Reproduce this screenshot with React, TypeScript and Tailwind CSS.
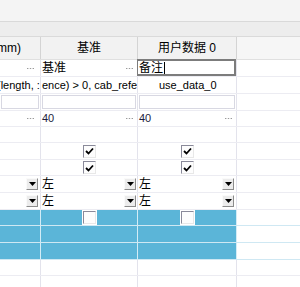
import React from "react";

const LINE = "border-[#e3e3ec]";

function Dots() {
  return (
    <svg width="7" height="3" viewBox="0 0 7 3" className="shrink-0">
      <rect x="0" y="1" width="1.4" height="1" fill="#9a9a9a" />
      <rect x="2.8" y="1" width="1.4" height="1" fill="#9a9a9a" />
      <rect x="5.6" y="1" width="1.4" height="1" fill="#9a9a9a" />
    </svg>
  );
}

function Check({ checked, big }: { checked: boolean; big?: boolean }) {
  return (
    <div
      className={`${big ? "w-[15px] h-[15px]" : "w-[13px] h-[13px]"} bg-[#fdfdfd] border border-t-[#8a8a9a] border-l-[#8a8a9a] border-r-[#e8e8e8] border-b-[#e8e8e8] flex items-center justify-center`}
    >
      {checked && (
        <svg width="9" height="8" viewBox="0 0 9 8">
          <path d="M1 4 L3.5 6.5 L8 1.5" stroke="#000" strokeWidth="1.8" fill="none" />
        </svg>
      )}
    </div>
  );
}

function Drop() {
  return (
    <div className="w-[12px] h-[12px] bg-[#ececec] border border-t-[#fafafa] border-l-[#fafafa] border-r-[#8c8c8c] border-b-[#8c8c8c] flex items-center justify-center">
      <svg width="7" height="4" viewBox="0 0 7 4">
        <path d="M0 0 H7 L3.5 4 Z" fill="#000" />
      </svg>
    </div>
  );
}

type RowProps = { h: string; blue?: boolean; children: React.ReactNode };

function Row({ h, blue, children }: RowProps) {
  return (
    <div
      className={`${h} grid grid-cols-[41px_97px_99px_63px] border-b ${blue ? "border-[#cfe8f3]" : "border-[#ececf2]"}`}
    >
      {children}
    </div>
  );
}

function Cell({
  blue,
  last,
  className = "",
  children,
}: {
  blue?: boolean;
  last?: boolean;
  className?: string;
  children?: React.ReactNode;
}) {
  return (
    <div
      className={`relative overflow-hidden whitespace-nowrap flex items-center ${last ? "" : "border-r"} ${blue ? "bg-[#5bb5d8] border-[#d3ecf6]" : `bg-white ${LINE}`} ${className}`}
    >
      {children}
    </div>
  );
}

const cjk = "font-['Liberation_Sans','Noto_Sans_CJK_SC',sans-serif]";

export default function App() {
  return (
    <div className={`w-[300px] h-[287px] overflow-hidden bg-white ${cjk} text-[11px] text-black leading-none`}>
      <div className="h-[21px] bg-[#f4f4f4]" />
      <div className="h-[1px] bg-[#d9d9d9]" />
      <div className="h-[15px] bg-[#ededed] border-b border-[#dadada]" />
      {/* header */}
      <div className="h-[23px] grid grid-cols-[41px_97px_99px_63px] border-b border-[#e0e0e0] bg-[#f2f2f2]">
        <div className="border-r border-[#d4d4d4] flex items-center overflow-hidden whitespace-nowrap text-[12px]">
          <span className="-ml-[3px]">mm)</span>
        </div>
        <div className="border-r border-[#d4d4d4] flex items-center justify-center text-[12px]">基准</div>
        <div className="border-r border-[#d4d4d4] flex items-center justify-center text-[12px]">
          用户数据&nbsp;0
        </div>
        <div className="bg-[#f6f6f6]" />
      </div>
      {/* row 1 */}
      <Row h="h-[17px]">
        <Cell className="justify-end pr-[6px]">
          <Dots />
        </Cell>
        <Cell className="justify-between pr-[4px]">
          <span className="text-[12px] ml-[1px]">基准</span>
          <Dots />
        </Cell>
        <Cell className="!overflow-visible">
          <div className="absolute -left-[1px] -top-[1px] right-0 bottom-[0px] border-2 border-[#7c7c7c] border-l-[1px] flex items-center text-[12px]">
            <span className="ml-[1px]">备注</span>
            <span className="w-[1px] h-[12px] bg-black ml-[1px]" />
          </div>
        </Cell>
        <Cell last />
      </Row>
      {/* row 2 */}
      <Row h="h-[17px]">
        <Cell>
          <span className="-ml-[3px]">(length, :</span>
        </Cell>
        <Cell>
          <span className="ml-[1px]">ence) &gt; 0, cab_refe</span>
        </Cell>
        <Cell>
          <span className="ml-[21px]">use_data_0</span>
        </Cell>
        <Cell last />
      </Row>
      {/* row 3 */}
      <Row h="h-[17px]">
        <Cell className="p-[1px]">
          <div className="w-full h-full border border-[#d8d8e2]" />
        </Cell>
        <Cell className="p-[1px]">
          <div className="w-full h-full border border-[#d8d8e2]" />
        </Cell>
        <Cell className="p-[1px]">
          <div className="w-full h-full border border-[#d8d8e2]" />
        </Cell>
        <Cell last />
      </Row>
      {/* row 4 */}
      <Row h="h-[16px]">
        <Cell className="justify-end pr-[6px]">
          <Dots />
        </Cell>
        <Cell className="justify-between pr-[4px]">
          <span className="ml-[1px] text-[#1c1c3c]">40</span>
          <Dots />
        </Cell>
        <Cell className="justify-between pr-[4px]">
          <span className="ml-[1px] text-[#1c1c3c]">40</span>
          <Dots />
        </Cell>
        <Cell last />
      </Row>
      {/* row 5 */}
      <Row h="h-[16px]">
        <Cell />
        <Cell />
        <Cell />
        <Cell last />
      </Row>
      {/* row 6 */}
      <Row h="h-[17px]">
        <Cell />
        <Cell className="justify-center">
          <Check checked />
        </Cell>
        <Cell className="justify-center">
          <Check checked />
        </Cell>
        <Cell last />
      </Row>
      {/* row 7 */}
      <Row h="h-[16px]">
        <Cell />
        <Cell className="justify-center">
          <Check checked />
        </Cell>
        <Cell className="justify-center">
          <Check checked />
        </Cell>
        <Cell last />
      </Row>
      {/* row 8 */}
      <Row h="h-[17px]">
        <Cell className="justify-end pr-[2px]">
          <Drop />
        </Cell>
        <Cell className="justify-between pr-[1px]">
          <span className="ml-[1px] text-[12px]">左</span>
          <Drop />
        </Cell>
        <Cell className="justify-between pr-[2px]">
          <span className="ml-[1px] text-[12px]">左</span>
          <Drop />
        </Cell>
        <Cell last />
      </Row>
      {/* row 9 */}
      <Row h="h-[17px]">
        <Cell className="justify-end pr-[2px]">
          <Drop />
        </Cell>
        <Cell className="justify-between pr-[1px]">
          <span className="ml-[1px] text-[12px]">左</span>
          <Drop />
        </Cell>
        <Cell className="justify-between pr-[2px]">
          <span className="ml-[1px] text-[12px]">左</span>
          <Drop />
        </Cell>
        <Cell last />
      </Row>
      {/* row 10 blue */}
      <Row h="h-[16px]" blue>
        <Cell blue />
        <Cell blue className="justify-center">
          <div className="bg-white p-[1px]">
            <Check checked={false} />
          </div>
        </Cell>
        <Cell blue className="justify-center">
          <div className="bg-white p-[1px]">
            <Check checked={false} />
          </div>
        </Cell>
        <Cell last />
      </Row>
      {/* row 11 blue */}
      <Row h="h-[17px]" blue>
        <Cell blue />
        <Cell blue />
        <Cell blue />
        <Cell last />
      </Row>
      {/* row 12 blue */}
      <Row h="h-[17px]" blue>
        <Cell blue />
        <Cell blue />
        <Cell blue />
        <Cell last />
      </Row>
      <Row h="h-[16px]">
        <Cell />
        <Cell />
        <Cell />
        <Cell last />
      </Row>
      <Row h="h-[16px]">
        <Cell />
        <Cell />
        <Cell />
        <Cell last />
      </Row>
    </div>
  );
}
